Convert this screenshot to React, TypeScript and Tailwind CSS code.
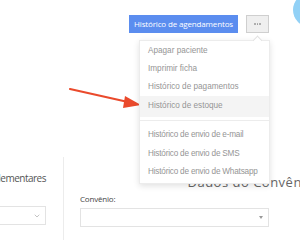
import { ChevronDown } from 'lucide-react';

const menuTop = ['Apagar paciente', 'Imprimir ficha', 'Histórico de pagamentos', 'Histórico de estoque'];
const menuBottom = ['Histórico de envio de e-mail', 'Histórico de envio de SMS', 'Histórico de envio de Whatsapp'];

function MoreMenu() {
  return (
    <div className="absolute right-[-1px] top-full mt-[7px] w-[131px] bg-white border border-[#ececec] shadow-[0_2px_6px_rgba(0,0,0,0.12)] py-[1px] z-10 font-['Liberation_Sans',Arial,sans-serif]">
      {/* caret */}
      <div className="absolute -top-[4px] right-[8px] w-[7px] h-[7px] bg-white border-l border-t border-[#e2e2e2] rotate-45" />
      {menuTop.map((label, i) => (
        <div
          key={label}
          className={
            'flex items-center pl-[8px] text-[8.2px] text-[#959595] whitespace-nowrap ' +
            (i === 3 ? 'bg-[#f4f4f4] h-[21px]' : 'h-[18px]')
          }
        >
          {label}
        </div>
      ))}
      <div className="h-px bg-[#ececec] mt-[3px] mb-[5px]" />
      {menuBottom.map((label) => (
        <div key={label} className="h-[18.5px] flex items-center pl-[8px] text-[8.2px] tracking-[-0.2px] text-[#959595] whitespace-nowrap">
          {label}
        </div>
      ))}
    </div>
  );
}

export default function App() {
  return (
    <div className="relative w-[300px] h-[240px] overflow-hidden bg-white font-['Open_Sans',sans-serif]">
      {/* avatar blob */}
      <div className="absolute left-[293px] -top-[7px] w-[34px] h-[34px] rounded-full bg-[#92d1f6]" />

      <div className="flex justify-end items-center gap-[8px] pt-[15px] pr-[31px]">
        <button className="h-[18px] w-[109px] shrink-0 bg-[#5b8def] text-white text-[8px] tracking-[-0.15px] flex items-center justify-center whitespace-nowrap">
          Histórico de agendamentos
        </button>
        <div className="relative">
          <button className="h-[18px] w-[23px] bg-[#efefef] border border-[#cfcfcf] flex items-center justify-center gap-[1px]">
            <span className="w-[1.5px] h-[1.5px] bg-[#999] rounded-full" />
            <span className="w-[1.5px] h-[1.5px] bg-[#999] rounded-full" />
            <span className="w-[1.5px] h-[1.5px] bg-[#999] rounded-full" />
          </button>
          <MoreMenu />
        </div>
      </div>

      <div className="flex mt-[124px]">
        <div className="w-[64px] border-r border-[#ececec] h-[90px] shrink-0 pr-[17px]">
          <div className="flex justify-end mt-[14px]">
            <span className="whitespace-nowrap text-[10px] tracking-[-0.5px] text-[#555]">Informações complementares</span>
          </div>
          <div className="mt-[20px] -ml-[10px] h-[19px] border border-[#e3e3e3] flex items-center justify-end pr-[4px]">
            <ChevronDown className="w-[8px] h-[8px] text-[#888]" strokeWidth={1.5} />
          </div>
        </div>
        <div className="flex-1 pl-[16px] pr-[31px]">
          <div className="flex justify-end -mr-[45px] mt-[16px]">
            <span className="whitespace-nowrap text-[13px] leading-[18px] text-[#666] tracking-[0.5px]">Dados do Convênio</span>
          </div>
          <div className="mt-[2px] text-[8px] tracking-[-0.2px] text-[#444]">Convênio:</div>
          <div className="mt-[3px] h-[19px] border border-[#e3e3e3] flex items-center justify-end pr-[5px]">
            <span className="w-0 h-0 border-l-[2.5px] border-r-[2.5px] border-t-[3px] border-l-transparent border-r-transparent border-t-[#999]" />
          </div>
        </div>
      </div>

      {/* annotation arrow */}
      <svg className="absolute left-0 top-0 pointer-events-none" width="300" height="240">
        <line x1="70" y1="89" x2="128" y2="102" stroke="#ea4a2c" strokeWidth="2.2" strokeLinecap="round" />
        <polygon points="141,105 125,96 123,108" fill="#ea4a2c" />
      </svg>
    </div>
  );
}
